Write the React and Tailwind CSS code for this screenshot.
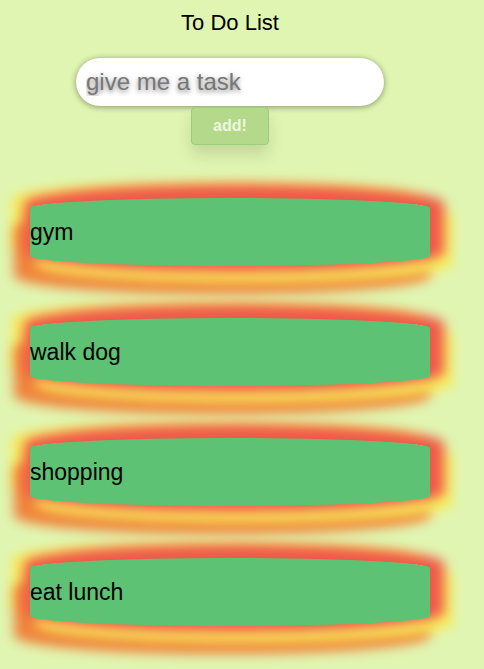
import { useState } from 'react'

const TASKS = ['gym', 'walk dog', 'shopping', 'eat lunch']

export default function App() {
  const [tasks, setTasks] = useState(TASKS)
  const [text, setText] = useState('')

  const addTask = () => {
    if (!text.trim()) return
    setTasks([...tasks, text.trim()])
    setText('')
  }

  return (
    <div className="min-h-screen w-full bg-[#e0f5b1] font-['Liberation_Sans',Arial,sans-serif] text-black">
      <div className="w-[460px] flex flex-col items-center">
        {/* Header */}
        <h1 className="pt-[10px] text-[22px] leading-[25px] font-normal">To Do List</h1>

        {/* Input + button */}
        <input
          value={text}
          onChange={(e) => setText(e.target.value)}
          placeholder="give me a task"
          className="mt-[23px] w-[308px] h-[48px] rounded-full bg-white pl-[10px] text-[24px] outline-none
                     shadow-[0_1px_6px_rgba(0,0,0,0.4)] placeholder:text-[#777777]
                     [text-shadow:0_2px_5px_rgba(0,0,0,0.5)]"
        />
        <button
          onClick={addTask}
          className="mt-[1px] w-[78px] h-[38px] rounded-[4px] bg-[#b4d98b] border border-[#9fcc7c]
                     text-[#eef7dd] text-[16px] font-bold shadow-[0_10px_16px_rgba(0,0,0,0.12)]"
        >
          add!
        </button>

        {/* Task list */}
        <ul className="mt-[53px] flex flex-col gap-[52px]">
          {tasks.map((t) => (
            <li
              key={t}
              className="w-[400px] h-[68px] flex items-center bg-[#5ec275] text-[23px] rounded-[200px/10px]
                         shadow-[4px_-4px_12px_10px_#ef5a4a,14px_8px_12px_8px_#f8ec5a,-8px_20px_12px_8px_#f0843c,-14px_-10px_12px_4px_#f8ec5a]"
            >
              {t}
            </li>
          ))}
        </ul>
      </div>
    </div>
  )
}
